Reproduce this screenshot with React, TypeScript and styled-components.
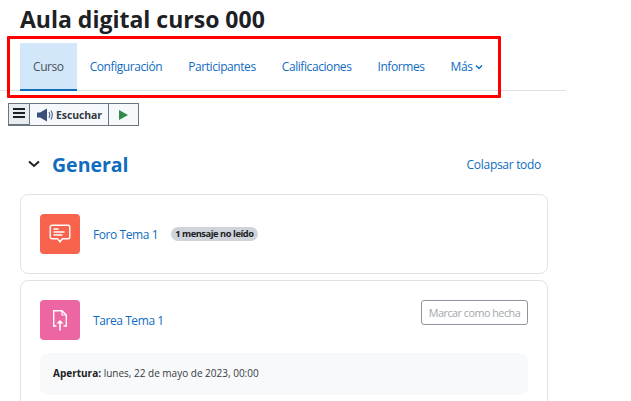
import React from 'react';

import styled, { createGlobalStyle } from 'styled-components';

const GlobalStyle = createGlobalStyle`
  html, body {
    margin: 0;
    padding: 0;
    background: #fff;
    overflow: hidden;
    font-family: 'Open Sans', 'Noto Sans', sans-serif;
    color: #1d2125;
  }
`;

const tabs = ['Configuración', 'Participantes', 'Calificaciones', 'Informes'];

const App: React.FC = () => {
  return (
    <StyledPage>
      <GlobalStyle />
      <Title>Aula digital curso 000</Title>
      <TabBar>
        <Tab $active>Curso</Tab>
        {tabs.map((tab) => (
          <Tab key={tab}>{tab}</Tab>
        ))}
        <Tab>
          Más
          <svg width="8" height="6" viewBox="0 0 8 6" fill="none">
            <path d="M1 1.5L4 4.5L7 1.5" stroke="#0f6cbf" strokeWidth="1.5" />
          </svg>
        </Tab>
      </TabBar>
      <Highlight />
      <ReaderBar>
        <ReaderMenu>
          <svg width="12" height="10" viewBox="0 0 12 10">
            <path d="M0 1h12M0 5h12M0 9h12" stroke="#1d2125" strokeWidth="2" />
          </svg>
        </ReaderMenu>
        <ReaderButton>
          <svg width="16" height="14" viewBox="0 0 16 14" fill="none">
            <path d="M0 4.5h3L10 .5v13L3 9.5H0z" fill="#3b4f7a" />
            <path d="M12 4c.9 1.8.9 4.2 0 6M14 2.5c1.5 2.6 1.5 6.4 0 9" stroke="#5a6a8a" strokeWidth="1.2" />
          </svg>
          Escuchar
        </ReaderButton>
        <ReaderButton>
          <svg width="9" height="10" viewBox="0 0 9 10">
            <path d="M0 0L9 5L0 10z" fill="#2f8a4c" />
          </svg>
        </ReaderButton>
      </ReaderBar>
      <Section>
        <SectionHeader>
          <SectionTitle>
            <svg width="12" height="8" viewBox="0 0 12 8" fill="none">
              <path d="M1 1.5L6 6L11 1.5" stroke="#1d2125" strokeWidth="2" />
            </svg>
            <h2>General</h2>
          </SectionTitle>
          <Link>Colapsar todo</Link>
        </SectionHeader>
        <Card $height={80}>
          <Activity>
            <ActivityIcon $color="#f7634d">
              <svg width="22" height="20" viewBox="0 0 22 20" fill="none">
                <path
                  d="M3 1.2h16a1.8 1.8 0 0 1 1.8 1.8v10a1.8 1.8 0 0 1-1.8 1.8h-5.5L11 17.8l-2.5-3H3A1.8 1.8 0 0 1 1.2 13V3A1.8 1.8 0 0 1 3 1.2z"
                  stroke="#fff"
                  strokeWidth="1.4"
                />
                <path d="M4.5 5h5M4.5 8h11M4.5 11h9" stroke="#fff" strokeWidth="1.3" />
              </svg>
            </ActivityIcon>
            <ActivityName>Foro Tema 1</ActivityName>
            <Badge>1 mensaje no leído</Badge>
          </Activity>
        </Card>
        <Card>
          <Activity>
            <ActivityIcon $color="#eb66a2">
              <svg width="16" height="22" viewBox="0 0 16 22" fill="none">
                <path d="M4.5 17H1.7V1.7H10L14.3 6V17H11.5" stroke="#fff" strokeWidth="1.4" />
                <path d="M10 1.7V6H14.3" stroke="#fff" strokeWidth="1.2" />
                <path d="M8 21.5V12" stroke="#fff" strokeWidth="1.6" />
                <path d="M4.4 14.6L8 11L11.6 14.6z" fill="#fff" />
              </svg>
            </ActivityIcon>
            <ActivityName>Tarea Tema 1</ActivityName>
            <CompletionButton>Marcar como hecha</CompletionButton>
          </Activity>
          <Dates>
            <strong>Apertura:</strong> lunes, 22 de mayo de 2023, 00:00
          </Dates>
        </Card>
      </Section>
    </StyledPage>
  );
};

const StyledPage = styled.div`
  position: relative;
  width: 631px;
  height: 401px;
  overflow: hidden;
`;

const Title = styled.h1`
  margin: 0;
  padding: 3px 0 0 20px;
  height: 39px;
  box-sizing: border-box;
  font-size: 23px;
  line-height: 32px;
  font-weight: 700;
  color: #1d2125;
  white-space: nowrap;
`;

const TabBar = styled.nav`
  display: flex;
  width: 546px;
  height: 47px;
  padding: 4px 0 0 20px;
  border-bottom: 1px solid #dee2e6;
`;

const Tab = styled.a<{ $active?: boolean }>`
  display: flex;
  align-items: center;
  gap: 3px;
  height: 48px;
  padding: 1px 13px 0;
  box-sizing: border-box;
  font-size: 12px;
  letter-spacing: -0.42px;
  white-space: nowrap;
  color: ${({ $active }) => ($active ? '#495057' : '#0f6cbf')};
  background: ${({ $active }) => ($active ? '#d3e7fa' : 'transparent')};
  border-bottom: 2px solid ${({ $active }) => ($active ? '#0f6cbf' : 'transparent')};
`;

const Highlight = styled.div`
  position: absolute;
  left: 7px;
  top: 36px;
  width: 494px;
  height: 62px;
  box-sizing: border-box;
  border: 3px solid #f00;
  border-radius: 1px;
`;

const ReaderBar = styled.div`
  display: flex;
  width: fit-content;
  height: 23px;
  margin: 12px 0 0 8px;
  box-sizing: border-box;
  border: 1px solid #6c757d;
  background: #f5f9fc;
`;

const ReaderMenu = styled.div`
  display: flex;
  align-items: center;
  justify-content: center;
  width: 21px;
  background: #e9ecef;
  border-right: 1px solid #6c757d;
  border-bottom: 1px solid #6c757d;
  padding-bottom: 3px;
  box-sizing: border-box;
`;

const ReaderButton = styled.div`
  display: flex;
  align-items: center;
  justify-content: center;
  gap: 3px;
  padding: 0 6px 0 7px;
  font-size: 10.5px;
  font-weight: 700;
  letter-spacing: -0.1px;
  color: #343a40;

  & + & {
    width: 30px;
    box-sizing: border-box;
    border-left: 1px solid #6c757d;
    padding: 0;
  }
`;

const Section = styled.section`
  width: 528px;
  margin: 0 0 0 20px;
  padding-top: 22px;
`;

const SectionHeader = styled.div`
  display: flex;
  align-items: center;
  justify-content: space-between;
  height: 32px;
  padding: 0 7px 0 8px;
  margin-bottom: 14px;
`;

const SectionTitle = styled.div`
  display: flex;
  align-items: center;
  gap: 12px;

  h2 {
    margin: 0;
    font-size: 19.5px;
    font-weight: 700;
    color: #0f6cbf;
  }
`;

const Link = styled.a`
  font-size: 12px;
  letter-spacing: -0.3px;
  color: #0f6cbf;
`;

const Card = styled.div<{ $height?: number }>`
  box-sizing: border-box;
  height: ${({ $height }) => ($height ? `${$height}px` : 'auto')};
  margin-bottom: 6px;
  padding: 19px;
  border: 1px solid #dee2e6;
  border-radius: 8px;
`;

const Activity = styled.div`
  display: flex;
  align-items: center;
`;

const ActivityIcon = styled.div<{ $color: string }>`
  display: flex;
  align-items: center;
  justify-content: center;
  flex: none;
  width: 40px;
  height: 40px;
  border-radius: 4px;
  background: ${({ $color }) => $color};
`;

const ActivityName = styled.a`
  margin-left: 13px;
  font-size: 12px;
  letter-spacing: -0.42px;
  color: #0f6cbf;
`;

const Badge = styled.span`
  margin-left: 13px;
  padding: 1px 4px;
  border-radius: 8px;
  background: #ced4da;
  font-size: 9.3px;
  letter-spacing: -0.45px;
  line-height: 12px;
  font-weight: 700;
  color: #1d2125;
`;

const CompletionButton = styled.div`
  margin: -15px 0 0 auto;
  width: 107px;
  height: 25px;
  box-sizing: border-box;
  display: flex;
  align-items: center;
  justify-content: center;
  border: 1px solid #8f959e;
  border-radius: 3px;
  font-size: 10.8px;
  letter-spacing: -0.5px;
  color: #a3a8ad;
  white-space: nowrap;
`;

const Dates = styled.div`
  margin-top: 13px;
  height: 42px;
  padding: 13px;
  box-sizing: border-box;
  border-radius: 8px;
  background: #f8f9fa;
  font-size: 10px;
  line-height: 14px;
  color: #343a40;

  strong {
    color: #1d2125;
    font-weight: 700;
  }
`;

export default App;
